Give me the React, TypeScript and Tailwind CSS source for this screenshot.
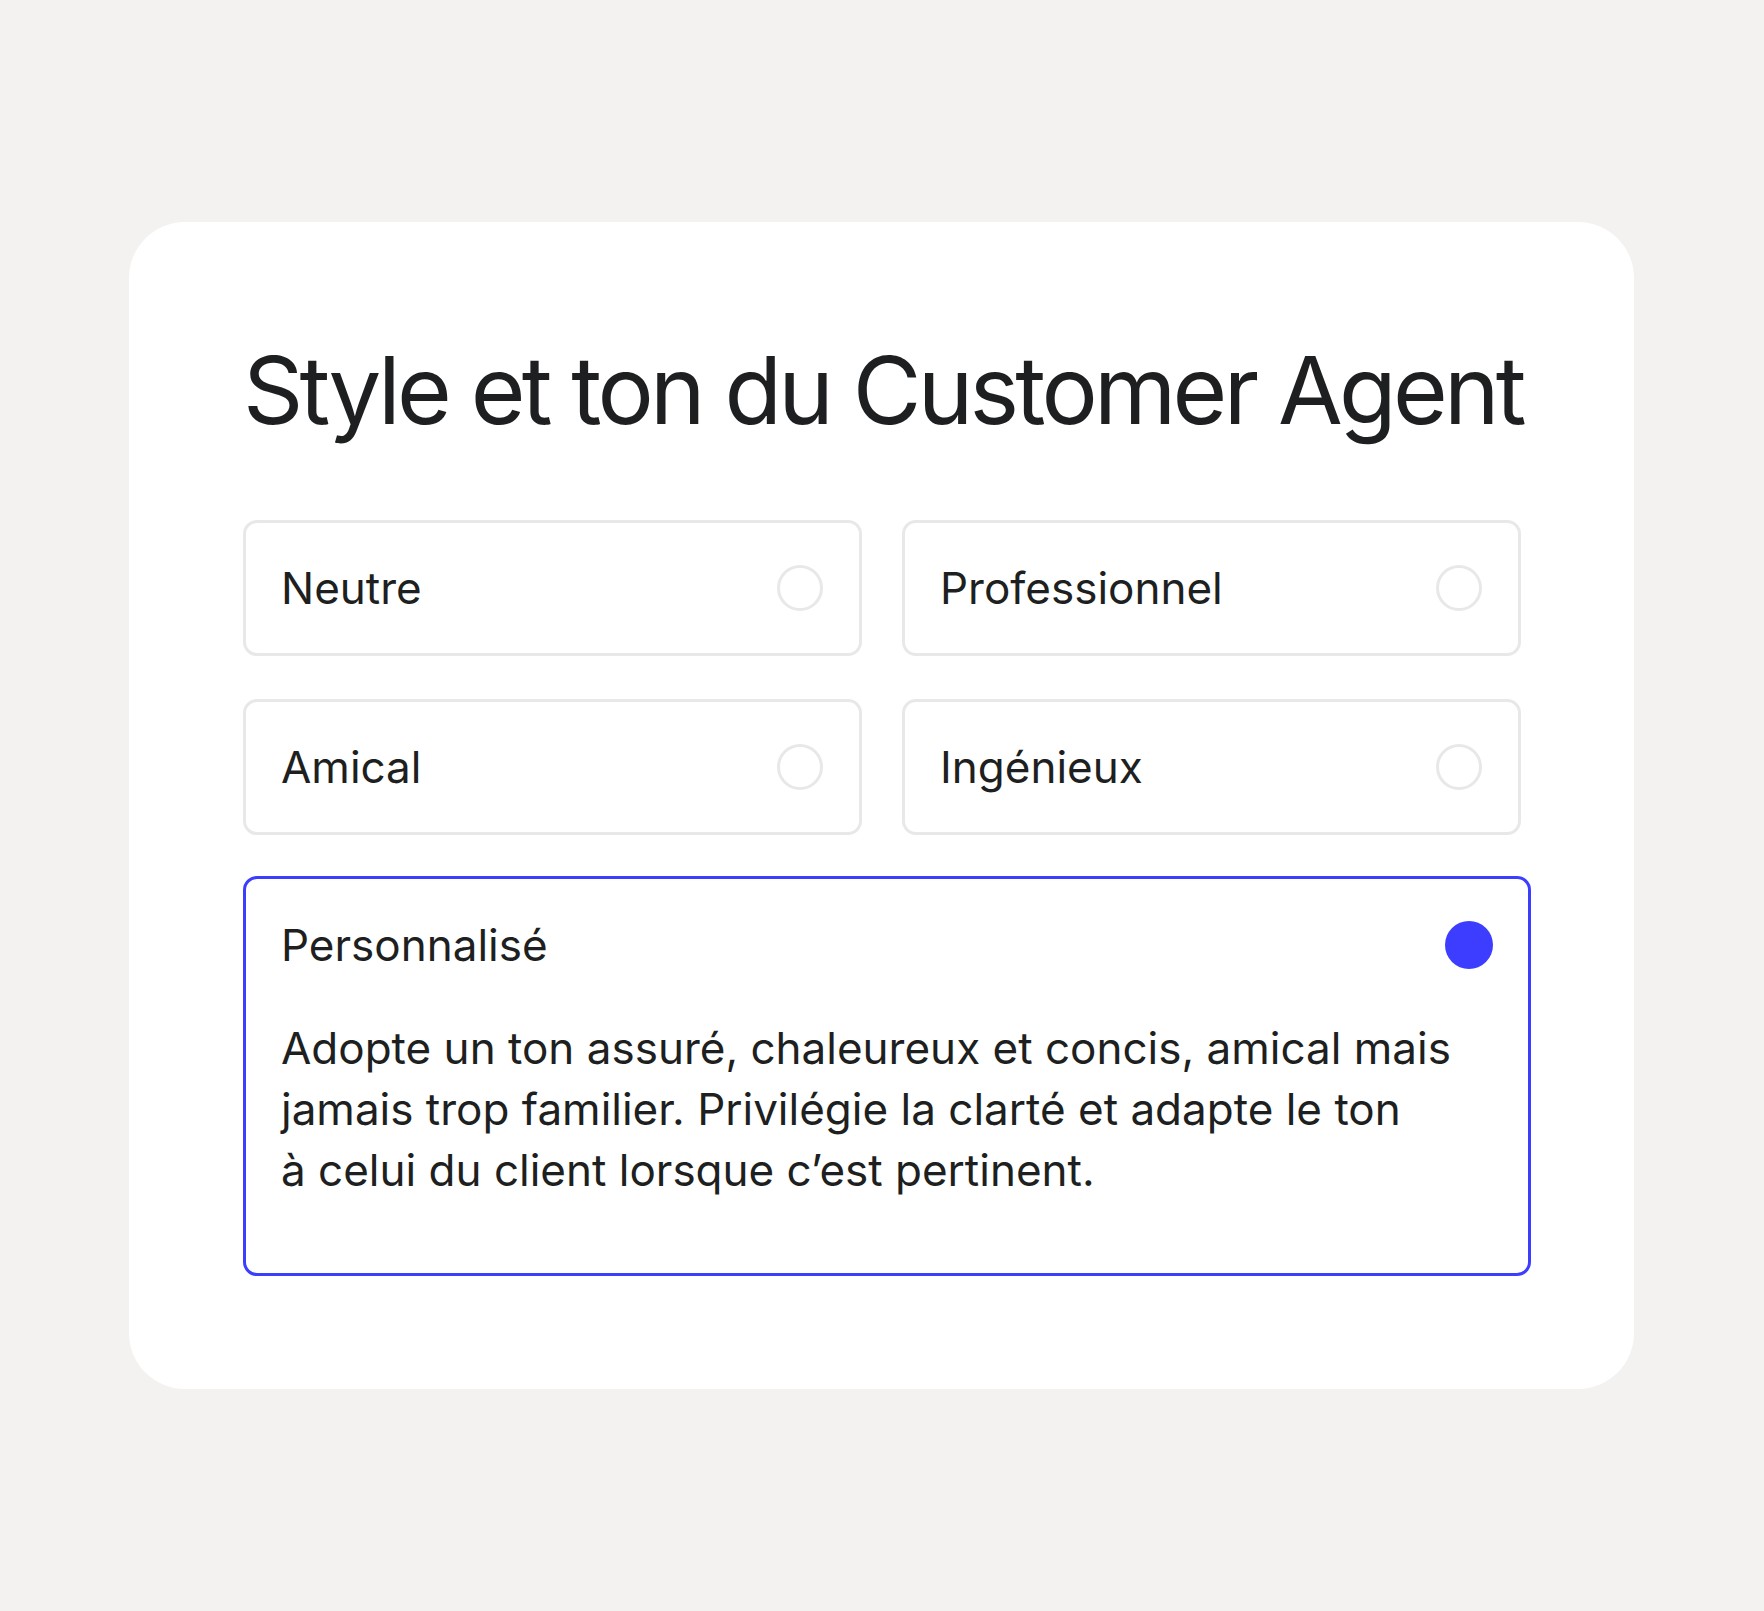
import React, { useState } from 'react';

const tones = ['Neutre', 'Professionnel', 'Amical', 'Ingénieux'];

export default function App() {
  const [selected, setSelected] = useState('Personnalisé');

  return (
    <div
      className="min-h-[1611px] bg-[#f3f2f0] pt-[222px] pl-[129px]"
      style={{ fontFamily: 'Inter, "Noto Sans", sans-serif' }}
    >
      <div className="w-[1505px] h-[1167px] bg-white rounded-[56px] pt-[121px] pl-[114px]">
        <h1 className="text-[94px] leading-none text-[#1e1f21] tracking-[-0.04em] whitespace-nowrap">
          Style et ton du Customer Agent
        </h1>

        <div className="mt-[83px] w-[1278px] grid grid-cols-2 gap-x-[40px] gap-y-[43px]">
          {tones.map((t) => (
            <button
              key={t}
              onClick={() => setSelected(t)}
              className="h-[136px] flex items-center justify-between border-[3px] border-[#e8e8e8] rounded-[14px] pl-[35px] pr-[36px] text-left"
            >
              <span className="text-[44px] text-[#1e1f21]">{t}</span>
              <span className="w-[46px] h-[46px] rounded-full border-[3px] border-[#e8e8e8]" />
            </button>
          ))}
        </div>

        {/* custom tone with free text */}
        <div
          onClick={() => setSelected('Personnalisé')}
          className="mt-[41px] w-[1288px] border-[3px] border-[#3d3dff] rounded-[14px] pt-[42px] pl-[35px] pr-[35px] pb-[72px]"
        >
          <div className="flex items-center justify-between h-[48px]">
            <span className="text-[44px] text-[#1e1f21]">Personnalisé</span>
            <span className="w-[48px] h-[48px] rounded-full bg-[#3d3dff]" />
          </div>
          <p className="mt-[49px] text-[44px] leading-[61px] text-[#1e1f21]">
            Adopte un ton assuré, chaleureux et concis, amical mais
            <br />
            jamais trop familier. Privilégie la clarté et adapte le ton
            <br />à celui du client lorsque c’est pertinent.
          </p>
        </div>
      </div>
    </div>
  );
}
